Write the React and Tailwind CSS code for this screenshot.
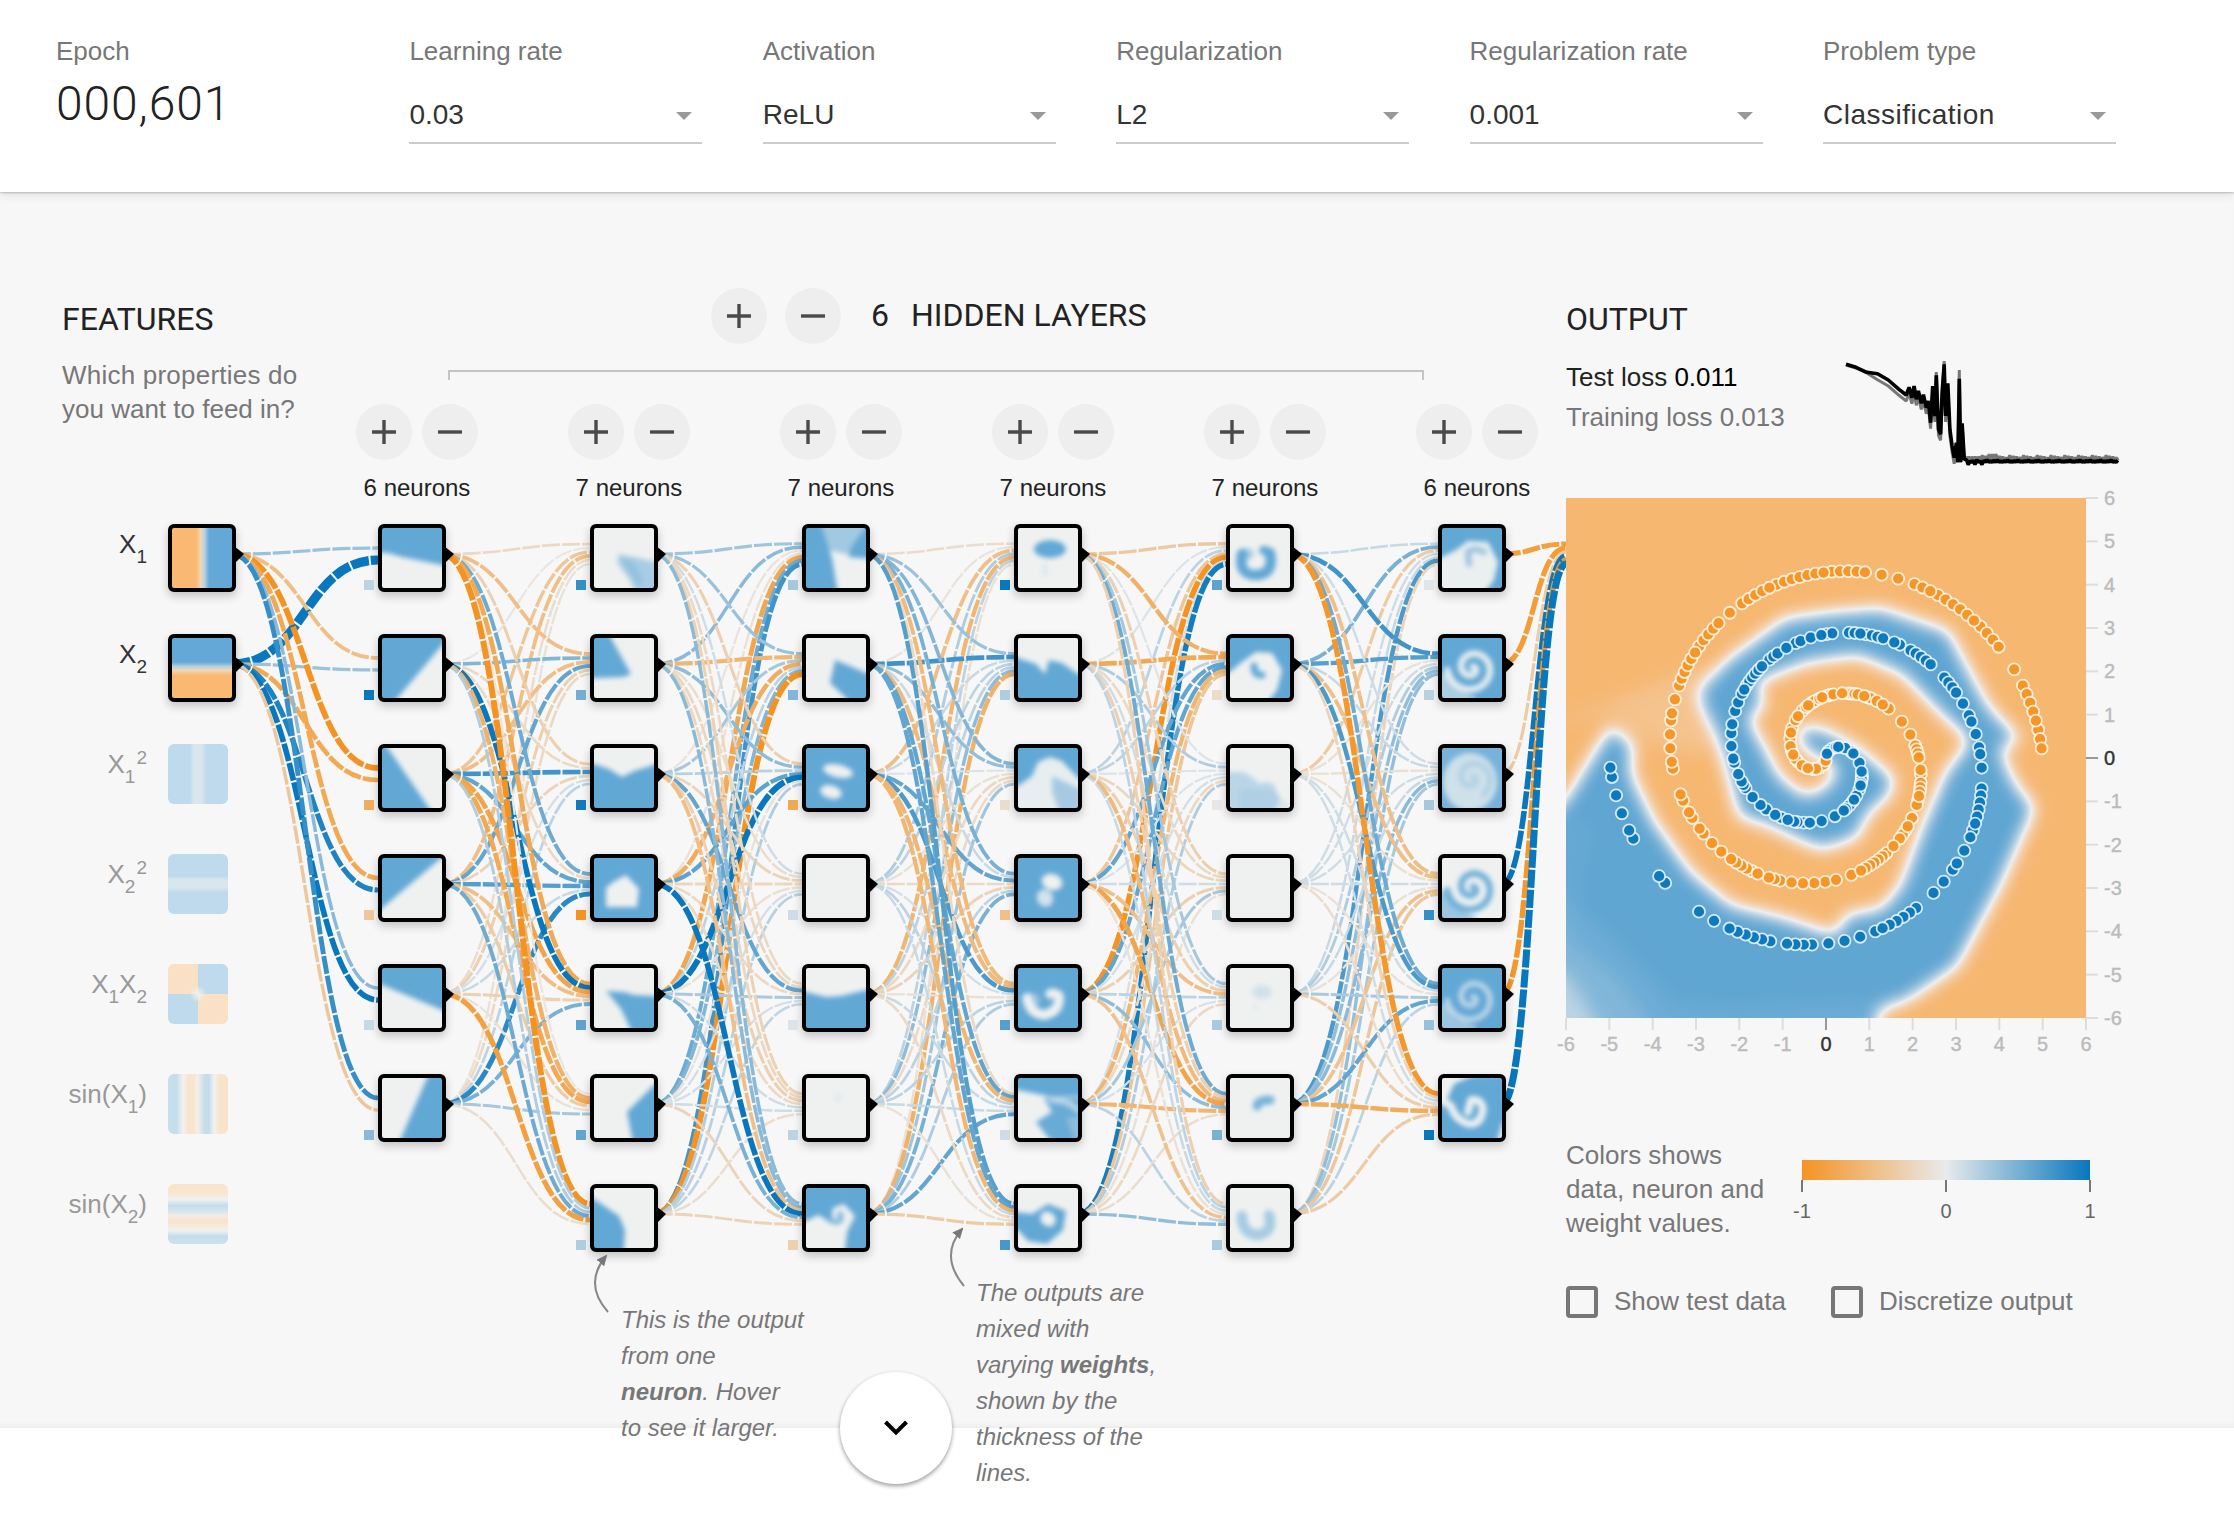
import React from "react";

const SANS = "font-['Liberation_Sans',Arial,sans-serif]";
const HEAD = "font-['Roboto',sans-serif]";

const MAIN_TOP = 192;
const NEG = [245, 147, 34];
const ZERO = [232, 234, 235];
const POS = [8, 119, 189];

function weightColor(w) {
  const t = Math.min(1, Math.abs(w));
  const end = w < 0 ? NEG : POS;
  return `rgb(${ZERO.map((z, i) => Math.round(z + (end[i] - z) * t)).join(",")})`;
}

/* ---------- network data ---------- */

const rowY = (row) => 554 + row * 110;
const layerX = [168, 378, 590, 802, 1014, 1226, 1438];

// weights[layer][destination][source]
const weights = [
  [
    [0.35, 2], [-0.5, 0.35], [-1.05, -0.75], [-0.75, 0.9], [0.42, 1], [0.8, -0.4],
  ],
  [
    [-0.2, -0.05, -0.4, -0.5, -0.15, -0.1],
    [-0.5, 0.45, -0.5, 0.6, -0.3, -0.2],
    [-0.3, -0.2, 0.75, -0.25, 0.1, 0.2],
    [0.55, -0.2, 0.6, 0.65, 0.15, 0.85],
    [-0.75, 1, -0.8, -0.5, -0.3, 0.5],
    [-0.05, -0.65, -0.75, -0.35, -0.1, 0.3],
    [-1.1, 0.25, 0.25, 0.55, -0.85, -0.15],
  ],
  [
    [0.32, 0.42, -0.08, -0.1, -0.78, 0.55, 0.75],
    [0.35, -0.6, 0.3, -0.7, 0.2, 0.45, -1.1],
    [-0.3, 0.4, 0.22, 0.62, 1.1, -0.1, 0.25],
    [0.12, -0.15, -0.25, -0.22, -0.12, 0.1, 0.22],
    [-0.2, -0.22, 0.6, -0.2, 0.28, 0.1, 0.18],
    [-0.28, -0.22, -0.3, -0.2, 0.12, 0.12, -0.15],
    [0.42, 0.42, -0.5, 1, 0.5, -0.25, -0.25],
  ],
  [
    [-0.15, -0.08, -0.5, 0.25, -0.6, 0.2, -0.12],
    [0.35, 0.75, 0.15, 0.2, 0.2, 0.4, -0.65],
    [0.45, 0.38, 0.05, -0.12, -0.2, -0.18, 0.32],
    [0.5, 0.15, 0.6, -0.2, -0.25, 0.2, 0.5],
    [-0.55, -0.55, 0.7, 0.1, -0.1, 0.2, 0.25],
    [-0.2, 0.6, -0.6, 0.2, 0.15, 0.15, 0.6],
    [0.65, 0.6, -0.6, 0.15, -0.2, -0.1, -0.35],
  ],
  [
    [-0.38, 0.06, 0.2, -0.4, -1, 0.1, 0.95],
    [-0.65, -0.75, 0.2, 0.6, 0.6, -0.6, -0.42],
    [0.05, 0.25, 0.05, 0.06, 0.1, -0.2, 0.25],
    [-0.3, -0.2, -0.22, 0.12, -0.3, 0.3, -0.12],
    [0.3, 0.12, -0.3, -0.5, 0.2, 0.08, -0.2],
    [0.55, -0.3, -0.55, -0.8, 0.4, -0.6, -0.15],
    [-0.3, 0.2, 0.15, -0.12, -0.45, 0.2, 0.38],
  ],
  [
    [0.15, 0.5, -0.35, 0.12, 0.15, 0.7, -0.25],
    [0.75, 0.65, -0.1, 0.12, 0.25, 0.38, 0.38],
    [0.12, 0.15, -0.12, 0.12, 0.15, 0.42, 0.3],
    [-0.5, -0.5, -0.12, 0.12, -0.1, -0.45, -0.4],
    [0.55, 0.7, 0.12, -0.1, 0.28, 0.6, 0.2],
    [-0.95, -0.25, 0.12, -0.15, -0.32, -0.7, -0.35],
  ],
  [[-0.85, -0.9, -0.35, 1, -0.95, 1.4]],
];

const biases = [
  [0.2, 1, -0.7, -0.4, 0.15, 0.42],
  [0.8, 0.52, 0.97, -1, 0.62, 0.6, 0.25],
  [0.3, 0.45, -0.75, 0.12, 0.05, 0.2, -0.3],
  [1, 0.25, -0.15, -0.48, 0.65, 0.12, 0.72],
  [0.62, -0.15, -0.03, 0.12, 0.28, 0.5, 0.28],
  [0.04, 0.22, 0.3, 0.8, 0.36, 1],
];

const links = weights.flatMap((dests, layer) =>
  dests.flatMap((sources, d) =>
    sources.map((w, s) => {
      const x0 = layerX[layer] + 64;
      const y0 = rowY(s) - MAIN_TOP;
      const x1 = layer === 6 ? 1566 : layerX[layer + 1];
      const n = sources.length;
      const y1 = rowY(d) - MAIN_TOP + ((s - (n - 1) / 2) / n) * 24;
      const m = (x0 + x1) / 2;
      return {
        key: `${layer}-${d}-${s}`,
        d: `M${x0},${y0}C${m},${y0} ${m},${y1} ${x1},${y1}`,
        w,
      };
    })
  )
);

/* ---------- neuron thumbnails ---------- */

const UNIT = 5;
function spiralPath(from, to, phase = 0) {
  let d = "";
  for (let i = from; i <= to; i += 3) {
    const r = 0.02 * i * UNIT;
    const t = 0.04398 * i + phase;
    d += `${d ? "L" : "M"}${(30 + r * Math.sin(t)).toFixed(1)},${(30 - r * Math.cos(t)).toFixed(1)}`;
  }
  return d;
}

const P = (points, v = 1) => <polygon points={points} fill={v > 0 ? "#fff" : "#808080"} fillOpacity={Math.abs(v)} />;
const E = (cx, cy, rx, ry, v = 1, rot = 0) => (
  <ellipse cx={cx} cy={cy} rx={rx} ry={ry} transform={`rotate(${rot} ${cx} ${cy})`} fill={v > 0 ? "#fff" : "#808080"} fillOpacity={Math.abs(v)} />
);
const S = (d, w, v = 1) => (
  <path d={d} fill="none" strokeWidth={w} stroke={v > 0 ? "#fff" : "#808080"} strokeOpacity={Math.abs(v)} strokeLinecap="round" strokeLinejoin="round" />
);
const FULL = P("-20,-20 80,-20 80,80 -20,80");

const thumbs = [
  [
    <>{P("-20,-20 80,-20 80,42 60,37 20,29 6,25 -20,24")}</>,
    <>{P("-20,-20 82,-20 73,-8 7,70 -20,80")}</>,
    <>{P("-20,-20 -8,-20 54,70 60,80 -20,80")}</>,
    <>{P("-20,-20 84,-20 58,1 -14,62 -20,66")}</>,
    <>{P("-20,-20 80,-20 80,51 60,42 0,17 -20,8")}</>,
    <>{P("53,-20 80,-20 80,80 10,80 19,60 45,0")}</>,
  ],
  [
    <>{P("24,26 40,29 80,38 80,80 48,80 36,52 24,36", 0.5)}{P("26,30 40,34 50,54 44,58", 0.3)}</>,
    <>{P("-20,-20 8,-20 18,2 37,36 30,39 -20,41")}</>,
    <>{P("-20,14 0,16 15,21 28,29 40,23 60,17 80,12 80,80 -20,80")}</>,
    <>{FULL}{P("12,30 19,24 32,17 45,31 43,49 12,49", -1)}</>,
    <>{P("12,23 30,24 40,27 80,29 80,80 40,80 36,60 27,41")}</>,
    <>{P("80,-12 60,7 33,34 38,60 44,80 80,80")}</>,
    <>{P("-20,2 0,11 25,28 31,42 29,80 -20,80")}</>,
  ],
  [
    <>{P("-20,-20 10,-20 22,18 26,30 31,60 34,80 -20,80")}{P("10,-20 80,-20 80,10 40,26 22,22", 0.55)}{P("64,-6 80,-20 80,32 42,29 46,18")}</>,
    <>{P("29,22 44,28 60,35 80,42 80,80 46,80 40,60 24,45")}</>,
    <>{FULL}{E(32, 23, 15, 6.5, -1, 12)}{E(25, 44, 11, 6.5, -1, 15)}</>,
    null,
    <>{P("-20,22 0,24 20,29 35,28 60,22 80,22 80,80 -20,80")}</>,
    <>{E(32, 20, 4, 5, 0.1)}</>,
    <>{FULL}{P("-20,38 0,33 12,27 25,34 27,20 38,16 49,28 41,44 37,80 -20,80", -1)}{S("M22,30Q32,38 35,30L34,26", 6, 0.75)}</>,
  ],
  [
    <>{E(32, 21, 16, 9, 1)}{E(27, 42, 3.5, 7, 0.12)}</>,
    <>{P("-20,14 0,20 18,26 27,36 31,22 44,25 60,36 80,40 80,80 -20,80")}</>,
    <>{FULL}{P("-20,44 0,38 14,28 20,14 32,9 44,13 60,30 80,40 80,80 -20,80", -0.95)}{P("34,28 60,40 80,44 80,80 48,80 40,60 34,44", 0.5)}</>,
    <>{FULL}{E(34, 24, 10.5, 8, -1, 15)}{E(27, 40, 9, 8, -0.8, 60)}</>,
    <>{FULL}{S("M9,30Q12,46 26,47Q42,44 41,28Q36,24 32,26", 9.5, -1)}{E(14, 32, 8, 7, -0.4)}</>,
    <>{P("-20,-20 80,-20 80,18 34,19 0,12 -20,10")}{P("26,20 80,20 80,80 46,80 18,44 34,34", 0.95)}{S("M34,22Q50,22 60,32", 6, -0.6)}{P("48,40 80,36 80,80 60,70", -0.25)}</>,
    <>{P("-20,22 14,26 30,16 48,23 45,42 29,56 10,53 0,42 -20,42")}{E(30, 31, 8, 7, -1, 40)}</>,
  ],
  [
    <>{S("M12,26Q8,48 27,47Q44,46 40,25Q36,24 34,23", 10.5, 1)}{E(16, 26, 8, 6, 0.5)}{E(29, 30, 6, 6, -0.6)}</>,
    <>{FULL}{P("-20,46 0,34 12,24 26,14 42,15 52,32 47,52 36,66 0,66 -20,80", -1)}{S("M24,28Q24,38 32,37", 7, 1)}</>,
    <>{P("-20,24 14,24 26,32 44,36 50,52 36,80 -20,80", 0.38)}{P("10,40 40,42 60,56 60,80 10,80", 0.14)}{E(30, 28, 5, 8, -0.8)}</>,
    null,
    <>{E(32, 24, 10, 7, 0.22)}{E(26, 40, 4, 4, 0.08)}</>,
    <>{S("M27,28Q28,22 40,22", 9, 0.85)}</>,
    <>{S("M12,28Q12,46 28,47Q44,44 39,27", 10.5, 0.52)}</>,
  ],
  [
    <>{FULL}{P("-20,40 2,28 14,22 26,13 46,14 56,34 52,52 42,66 38,80 -20,80", -0.97)}{S("M27,36L26,24Q32,19 42,24", 6, 0.6)}</>,
    <>{FULL}{S(spiralPath(14, 250), 6.4, -0.95)}{P("-20,36 6,36 14,50 34,60 34,80 -20,80", -0.5)}</>,
    <>{P("-20,-20 80,-20 80,80 -20,80", 0.85)}{E(28, 34, 27, 29, -0.72)}{S(spiralPath(14, 200), 5, 0.3)}</>,
    <>{S(spiralPath(14, 250), 6.4, 0.9)}{P("-20,28 4,34 14,50 34,60 34,80 -20,80", 0.6)}</>,
    <>{FULL}{S(spiralPath(14, 250), 5.4, -0.65)}{P("-20,36 4,36 12,50 34,58 34,80 -20,80", -0.4)}</>,
    <>
      {FULL}
      {S("M26,34L29,22Q39,20 41,31Q39,47 27,46Q13,42 9,28L-4,20", 7.5, -1)}
      {P("-20,-20 80,-20 80,-4 30,-2 12,6 4,24 -20,34", -1)}
      {P("80,34 60,46 50,80 80,80", -0.95)}
      {P("70,-20 80,-20 80,60 62,20", -0.8)}
    </>,
  ],
];

function Thumb({ children }) {
  return (
    <svg viewBox="0 0 60 60" className="block size-[60px] overflow-hidden rounded-[2px]">
      <g filter="url(#thumbField)">
        <rect x="-30" y="-30" width="120" height="120" fill="#808080" />
        {children}
      </g>
    </svg>
  );
}

function Neuron({ x, y, bias, children }) {
  return (
    <>
      <div
        className="absolute size-[68px] rounded-[6px] border-4 border-black bg-black shadow-[0_4px_10px_rgba(0,0,0,0.22)]"
        style={{ left: x, top: y - 30 - MAIN_TOP }}
      >
        {children}
      </div>
      {bias !== undefined && (
        <div
          className="absolute size-[10px]"
          style={{ left: x - 14, top: y + 26 - MAIN_TOP, background: weightColor(bias) }}
        />
      )}
    </>
  );
}

/* ---------- input features ---------- */

const Sub = ({ children }) => <span className="relative top-[10px] text-[19px]">{children}</span>;
const Sup = ({ children }) => <span className="relative -top-[9px] ml-px text-[19px]">{children}</span>;

const features = [
  { label: <>X<Sub>1</Sub></>, active: true, fill: "bg-[linear-gradient(90deg,#f9b972_40%,#f3d6b3_48%,#b9d2e2_54%,#63a8d6_62%)]" },
  { label: <>X<Sub>2</Sub></>, active: true, fill: "bg-[linear-gradient(180deg,#63a8d6_40%,#b9d2e2_48%,#f3d6b3_54%,#f9b972_62%)]" },
  { label: <>X<Sub>1</Sub><Sup>2</Sup></>, fill: "bg-[linear-gradient(90deg,#bfdaec_36%,#d8e7ee_44%,#d8e7ee_56%,#bfdaec_64%)]" },
  { label: <>X<Sub>2</Sub><Sup>2</Sup></>, fill: "bg-[linear-gradient(180deg,#bfdaec_36%,#d8e7ee_44%,#d8e7ee_56%,#bfdaec_64%)]" },
  { label: <>X<Sub>1</Sub>X<Sub>2</Sub></>, fill: "bg-[radial-gradient(circle,#f1f1ee_0,#f1f1ee00_20%),conic-gradient(#bfdaec_0_25%,#fae1c6_25%_50%,#bfdaec_50%_75%,#fae1c6_75%)]" },
  { label: <>sin(X<Sub>1</Sub>)</>, fill: "bg-[linear-gradient(90deg,#c9dfed_0,#c3ddec_14%,#f1f2f1_25%,#f9e3cb_34%,#f9e6d0_42%,#f3efe8_50%,#c8dfec_60%,#c3ddec_68%,#f1f2f1_77%,#f9e3cb_86%,#f9e3cb_100%)]" },
  { label: <>sin(X<Sub>2</Sub>)</>, fill: "bg-[linear-gradient(180deg,#f9e3cb_0,#f9e6d2_16%,#eff1f2_26%,#c3ddec_36%,#d5e5ee_46%,#f4ece2_53%,#f9e3cb_62%,#f9e9d8_70%,#eff1f1_78%,#c3ddec_87%,#cde1ed_100%)]" },
];

function Feature({ label, active, fill, row }) {
  const y = rowY(row);
  return (
    <>
      <div
        className={`absolute left-0 w-[147px] text-right text-[26px] leading-[30px] whitespace-nowrap ${active ? "text-[#333]" : "text-[#999]"}`}
        style={{ top: y - MAIN_TOP - 25 }}
      >
        {label}
      </div>
      {active ? (
        <Neuron x={168} y={y}>
          <div className={`size-[60px] rounded-[2px] ${fill}`} />
        </Neuron>
      ) : (
        <div className={`absolute left-[168px] size-[60px] rounded-[6px] ${fill}`} style={{ top: y - 30 - MAIN_TOP }} />
      )}
    </>
  );
}

function Network() {
  return (
    <div className="absolute left-0 top-0 h-[1236px] w-[1566px]">
      <svg className="absolute left-0 top-0 overflow-hidden" width="1566" height="1236">
        {links.map((l) => (
          <path
            key={l.key}
            d={l.d}
            fill="none"
            stroke={weightColor(l.w)}
            strokeWidth={2 + 3.6 * Math.abs(l.w)}
            strokeDasharray="18 2"
            strokeDashoffset={-0.67}
          />
        ))}
        {layerX.flatMap((x, l) =>
          Array.from({ length: l === 0 ? 2 : biases[l - 1].length }, (_, r) => {
            const y = rowY(r) - MAIN_TOP;
            return <path key={`${l}-${r}`} d={`M${x + 66},${y + 10}L${x + 76},${y}L${x + 66},${y - 8}Z`} />;
          })
        )}
      </svg>
      {features.map((f, i) => (
        <Feature key={i} row={i} {...f} />
      ))}
      {thumbs.map((layer, l) =>
        layer.map((shape, r) => (
          <Neuron key={`${l}-${r}`} x={layerX[l + 1]} y={rowY(r)} bias={biases[l][r]}>
            <Thumb>{shape}</Thumb>
          </Neuron>
        ))
      )}
    </div>
  );
}

/* ---------- output plot ---------- */

const blueIdx = [
  5, 8, 13, 17, 19, 22, 25, 30, 32, 39, 44, 46, 47, 48, 50, 51, 53, 56, 58, 59, 61, 63, 64, 68, 73, 77, 79, 81, 82, 84,
  86, 88, 91, 93, 96, 99, 100, 101, 103, 106, 107, 110, 113, 115, 118, 120, 122, 123, 124, 125, 126, 127, 128, 129, 131,
  132, 133, 135, 137, 138, 140, 142, 143, 144, 147, 148, 149, 150, 151, 152, 153, 155, 156, 158, 159, 160, 161, 162, 165,
  166, 167, 168, 170, 172, 173, 175, 177, 178, 180, 183, 184, 185, 186, 187, 188, 189, 190, 192, 194, 195, 197, 199, 202,
  203, 204, 205, 206, 207, 208, 210, 212, 214, 216, 217, 218, 219, 221, 222, 223, 224, 225, 226, 228, 230, 235, 236, 241,
  242, 244, 246, 248, 249,
];
const orangeIdx = [
  3, 8, 14, 17, 20, 24, 26, 29, 33, 35, 38, 40, 43, 47, 50, 52, 56, 58, 61, 63, 64, 65, 66, 67, 69, 70, 72, 73, 74, 77, 79,
  80, 81, 82, 84, 85, 86, 88, 90, 92, 97, 101, 104, 105, 106, 107, 110, 111, 113, 114, 115, 116, 117, 118, 121, 123, 124,
  125, 126, 128, 130, 131, 132, 133, 134, 135, 136, 138, 141, 143, 145, 147, 149, 151, 152, 153, 155, 156, 157, 158, 159,
  160, 162, 164, 166, 167, 169, 170, 172, 173, 177, 178, 180, 182, 184, 185, 187, 189, 190, 191, 192, 193, 194, 195, 196,
  197, 198, 199, 201, 203, 204, 205, 206, 207, 208, 209, 210, 211, 212, 213, 214, 215, 216, 217, 218, 219, 221, 223, 225,
  226, 227, 228, 229, 230, 231, 232, 233, 234, 235, 236, 237, 240, 242, 243, 244, 245, 246, 247, 248, 249,
];

const jitter = (i) => ((i * 7919) % 13) - 6;

function Dots({ indices, phase, fill }) {
  const order = [...indices].sort((a, b) => jitter(a) - jitter(b));
  return order.map((i) => {
    const r = (i / 250) * 5 * (520 / 12);
    const t = 0.04398 * i + phase;
    return (
      <circle key={i} cx={260 + r * Math.sin(t)} cy={260 - r * Math.cos(t)} r="6" fill={fill} fillOpacity="0.95" stroke="#fff" strokeOpacity="0.8" strokeWidth="1.8" />
    );
  });
}

function OutputPlot() {
  const ticks = Array.from({ length: 13 }, (_, i) => i - 6);
  const at = (v) => ((v + 6) / 12) * 520;
  return (
    <svg width="580" height="562" className="block overflow-visible">
      <svg width="520" height="520" viewBox="68 46 1358.6 1358.6">
        <g filter="url(#plotField)">
          <rect x="-100" y="-100" width="1700" height="1700" fill="#000" />
          <polygon points="-60,660 120,600 200,570 430,480 500,560 460,680 430,720 330,700 240,660 185,610" fill="#fff" fillOpacity="0.13" />
          <polygon
            fill="#fff"
            points="-60,960 68,830 125,735 185,640 245,690 240,765 300,890 395,1022 500,1108 640,1142 772,1186 800,1132 890,1118 940,1060 1000,900 1060,760 1122,680 1040,605 945,508 830,460 700,478 568,528 590,590 545,620 590,700 625,770 690,822 740,805 775,762 745,732 700,715 668,672 685,640 745,648 830,695 928,778 914,825 860,870 830,935 740,966 680,944 600,905 518,880 495,790 460,670 425,600 412,550 488,468 640,358 760,342 890,332 1068,392 1114,480 1174,590 1258,678 1203,700 1242,790 1294,855 1204,1060 1092,1270 960,1360 885,1385 880,1560 -60,1560"
          />
          <polygon points="-60,1260 68,1290 150,1420 150,1560 -60,1560" fill="#808080" fillOpacity="0.55" />
          <polygon points="-60,1090 200,1300 290,1420 290,1560 -60,1560" fill="#808080" fillOpacity="0.16" />
          <polygon points="-60,1000 180,1180 360,1372 520,1380 860,1360 860,1560 -60,1560" fill="#808080" fillOpacity="0.09" />
          <polygon points="-60,850 140,900 80,1200 -60,1200" fill="#808080" fillOpacity="0.05" />
        </g>
      </svg>
      <Dots indices={orangeIdx} phase={Math.PI} fill="#f59322" />
      <Dots indices={blueIdx} phase={0} fill="#0877bd" />
      {ticks.map((v) => (
        <g key={v} className="text-[20px]" fill={v === 0 ? "#333" : "#bbb"}>
          <path d={`M${at(v)},520v12`} stroke={v === 0 ? "#999" : "#ddd"} strokeWidth="2" />
          <text x={at(v)} y="553" textAnchor="middle" stroke={v === 0 ? "#333" : "#bbb"} strokeWidth="0.4">{v}</text>
          <path d={`M520,${at(-v)}h12`} stroke={v === 0 ? "#999" : "#ddd"} strokeWidth="2" />
          <text x="538" y={at(-v) + 7} stroke={v === 0 ? "#333" : "#bbb"} strokeWidth="0.4">{v}</text>
        </g>
      ))}
    </svg>
  );
}

const lossHead = [
  [1026, 1095], [1040, 1104], [1055, 1119], [1070, 1123], [1085, 1142], [1100, 1170], [1110, 1187], [1114, 1164],
  [1118, 1195], [1121, 1160], [1124, 1200], [1127, 1175], [1131, 1212], [1134, 1186], [1138, 1225], [1141, 1205],
  [1144, 1270], [1147, 1160], [1150, 1250], [1152, 1128], [1155, 1290], [1158, 1305], [1160, 1180], [1163, 1095],
  [1165, 1250], [1168, 1152], [1171, 1290], [1174, 1340], [1177, 1375], [1180, 1330], [1182, 1388], [1184, 1138],
  [1186, 1388], [1188, 1272], [1191, 1380],
];

function LossChart() {
  const pt = (x, y) => `${((x - 1026) / 1.395 + 1).toFixed(1)},${((y - 1085) / 3).toFixed(1)}`;
  const head = lossHead.map(([x, y]) => pt(x, y));
  const tail = [];
  for (let x = 1194, k = 0; x <= 1406; x += 2.4, k++) {
    tail.push(pt(x, k % 2 ? (x < 1220 && k % 4 === 1 ? 1396 : 1389) : 1381 + ((k * 5) % 6)));
  }
  const train = lossHead.map(([x, y], i) => pt(x, y + (i > 2 && i < 30 ? 18 : 2) - (i === 19 || i === 23 || i === 31 ? 28 : 0)));
  const trainTail = [];
  for (let x = 1192, k = 0; x <= 1406; x += 2.4, k++) {
    trainTail.push(pt(x, k % 2 ? 1384 : x < 1215 ? 1372 : x > 1222 && x < 1240 ? 1364 : 1374 - ((k * 3) % 8)));
  }
  return (
    <svg width="276" height="110" className="overflow-visible" fill="none" strokeLinejoin="bevel">
      <polyline points={[...train, ...trainTail].join(" ")} stroke="#777" strokeWidth="3" />
      <polyline points={[...head, ...tail].join(" ")} stroke="#000" strokeWidth="3.6" />
    </svg>
  );
}

/* ---------- controls ---------- */

function RoundButton({ minus }) {
  return (
    <button className="flex size-[56px] items-center justify-center rounded-full bg-[#eee]">
      <svg width="24" height="24" stroke="#4a4a4a" strokeWidth="3.4">
        <path d={minus ? "M0,12H24" : "M0,12H24M12,0V24"} />
      </svg>
    </button>
  );
}

function Select({ label, value, tracking }) {
  return (
    <div className="w-[293px]">
      <div className="text-[26px] leading-[34px] text-[#777]">{label}</div>
      <div className="mt-5 flex h-[56px] items-center justify-between border-b-2 border-[#ccc] pr-[10px]">
        <span className={`text-[28px] leading-[34px] text-[#333] ${tracking || ""}`}>{value}</span>
        <svg width="16" height="8" className="mt-[2px]">
          <path d="M0,0H16L8,8Z" fill="#999" />
        </svg>
      </div>
    </div>
  );
}

function Checkbox({ label }) {
  return (
    <label className="flex items-center gap-4 text-[26px] text-[#777]">
      <span className="size-[32px] rounded-[4px] border-4 border-[#777]" />
      <span className="pb-[2px] leading-[30px]">{label}</span>
    </label>
  );
}

const layerCounts = [6, 7, 7, 7, 7, 6];

export default function App() {
  return (
    <div className={`h-[1526px] w-[2234px] overflow-hidden bg-white ${SANS}`}>
      <svg width="0" height="0" className="absolute">
        <defs>
          <filter id="thumbField" x="-30" y="-30" width="120" height="120" filterUnits="userSpaceOnUse" colorInterpolationFilters="sRGB">
            <feGaussianBlur stdDeviation="2.9" />
            <feComponentTransfer>
              <feFuncR type="table" tableValues="0.976 0.941 0.388" />
              <feFuncG type="table" tableValues="0.722 0.949 0.659" />
              <feFuncB type="table" tableValues="0.443 0.945 0.839" />
            </feComponentTransfer>
          </filter>
          <filter id="plotField" x="-100" y="-100" width="1700" height="1700" filterUnits="userSpaceOnUse" colorInterpolationFilters="sRGB">
            <feGaussianBlur stdDeviation="23" />
            <feComponentTransfer>
              <feFuncR type="table" tableValues="0.965 0.961 0.933 0.66 0.376" />
              <feFuncG type="table" tableValues="0.718 0.81 0.933 0.79 0.651" />
              <feFuncB type="table" tableValues="0.443 0.66 0.937 0.88 0.827" />
            </feComponentTransfer>
          </filter>
          <marker id="calloutArrow" markerWidth="14" markerHeight="14" refX="9" refY="5" orient="auto" markerUnits="userSpaceOnUse">
            <path d="M0,0L11,5L0,10Z" fill="#777" />
          </marker>
        </defs>
      </svg>

      <header className="relative z-10 flex h-[192px] gap-[60.4px] bg-white px-14 pt-[34px] shadow-[0_1px_2px_rgba(0,0,0,0.22),0_3px_10px_rgba(0,0,0,0.09)]">
        <div className="w-[293px]">
          <div className="text-[26px] leading-[34px] text-[#777]">Epoch</div>
          <div className={`mt-2 text-[48px] leading-[56px] font-light tracking-[0.9px] text-[#222] ${HEAD}`}>000,601</div>
        </div>
        <Select label="Learning rate" value="0.03" />
        <Select label="Activation" value="ReLU" />
        <Select label="Regularization" value="L2" />
        <Select label="Regularization rate" value="0.001" />
        <Select label="Problem type" value="Classification" tracking="tracking-[0.5px]" />
      </header>

      <main className="relative flex h-[1236px] bg-[#f7f7f7] pl-[62px] shadow-[inset_0_-6px_8px_-6px_rgba(0,0,0,0.08)]">
        <Network />

        <section className="w-[284px] pt-[107px]">
          <h4 className={`text-[32px] leading-[40px] text-[#222] ${HEAD}`}>FEATURES</h4>
          <p className="mt-[19px] text-[26px] leading-[34px] whitespace-nowrap text-[#777]">
            <span className="tracking-[0.22px]">Which properties do</span>
            <br />
            you want to feed in?
          </p>
        </section>

        <section className="w-[1220px] pt-24">
          <div className="flex items-center pl-[365px]">
            <RoundButton />
            <div className="w-[18px]" />
            <RoundButton minus />
            <h4 className={`flex gap-[22px] pb-[2px] pl-[30px] text-[32px] leading-[40px] whitespace-nowrap text-[#222] ${HEAD}`}>
              <span>6</span>
              <span>HIDDEN LAYERS</span>
            </h4>
          </div>
          <div className="mt-[26px] ml-[102px] h-[10px] w-[976px] border-x-2 border-t-2 border-[#c4c4c4]" />
          <div className="mt-6 flex gap-[90px] pl-[10px]">
            {layerCounts.map((n, i) => (
              <div key={i} className="flex w-[122px] flex-col items-center">
                <div className="flex gap-[10px]">
                  <RoundButton />
                  <RoundButton minus />
                </div>
                <div className="mt-[13px] text-[24px] leading-[30px] whitespace-nowrap text-[#222]">{n} neurons</div>
              </div>
            ))}
          </div>
        </section>

        <section className="w-[580px] pt-[107px]">
          <h4 className={`text-[32px] leading-[40px] text-[#222] ${HEAD}`}>OUTPUT</h4>
          <div className="mt-[18px] flex h-[141px] text-[26px] leading-[40px]">
            <div className="w-[279px]">
              <div className="text-[#222]">Test loss <span className="text-black">0.011</span></div>
              <div className="text-[#777]">Training loss 0.013</div>
            </div>
            <div className="pt-1"><LossChart /></div>
          </div>
          <OutputPlot />
          <div className="mt-[78px] flex">
            <p className="w-[236px] text-[26px] leading-[34px] whitespace-nowrap text-[#777]">
              Colors shows
              <br />
              <span className="tracking-[0.1px]">data, neuron and</span>
              <br />
              weight values.
            </p>
            <div className="w-[288px] pt-[22px] text-[#666]">
              <div className="h-[20px] bg-[linear-gradient(90deg,#f59322,#e8eaeb,#0877bd)]" />
              <div className="-mx-px flex h-[12px] justify-between">
                <i className="w-[2px] bg-[#777]" />
                <i className="w-[2px] bg-[#777]" />
                <i className="w-[2px] bg-[#777]" />
              </div>
              <div className="-mx-[10px] mt-2 flex justify-between text-[20px] leading-[22px]">
                <span className="w-5 text-center">-1</span>
                <span className="w-5 text-center">0</span>
                <span className="w-5 text-center">1</span>
              </div>
            </div>
          </div>
          <div className="mt-[46px] flex gap-[45px] whitespace-nowrap">
            <Checkbox label="Show test data" />
            <Checkbox label="Discretize output" />
          </div>
        </section>

        <svg className="pointer-events-none absolute left-0 top-0" width="1100" height="1236" fill="none" stroke="#888" strokeWidth="2">
          <path d="M608,1120Q583,1092 606,1064" markerEnd="url(#calloutArrow)" />
          <path d="M964,1094Q939,1064 962,1037" markerEnd="url(#calloutArrow)" />
        </svg>
        <div className="absolute left-[621px] top-[1110px] text-[24px] leading-[36px] whitespace-nowrap text-[#777] italic">
          This is the output
          <br />
          from one
          <br />
          <b>neuron</b>. Hover
          <br />
          to see it larger.
        </div>
        <div className="absolute left-[976px] top-[1083px] text-[24px] leading-[36px] whitespace-nowrap text-[#777] italic">
          The outputs are
          <br />
          mixed with
          <br />
          varying <b>weights</b>,
          <br />
          shown by the
          <br />
          thickness of the
          <br />
          lines.
        </div>
        <button className="absolute left-[840px] top-[1180px] flex size-[112px] items-center justify-center rounded-full bg-white shadow-[0_2px_4px_rgba(0,0,0,0.4)]">
          <svg width="24" height="16" fill="none" stroke="#000" strokeWidth="4">
            <path d="M1.5,2L12,12.5L22.5,2" />
          </svg>
        </button>
      </main>
    </div>
  );
}
